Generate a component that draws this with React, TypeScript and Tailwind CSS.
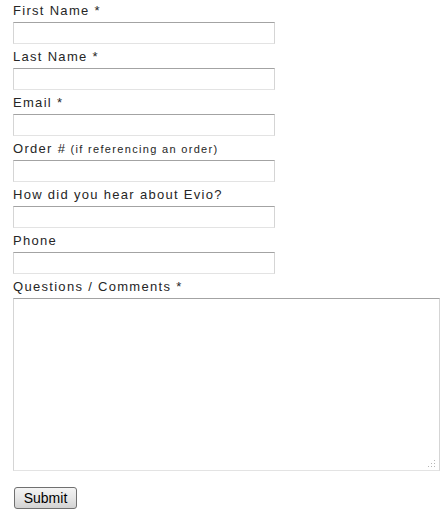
const fields = [
  { label: 'First Name *' },
  { label: 'Last Name *' },
  { label: 'Email *' },
  { label: 'Order #', note: '(if referencing an order)' },
  { label: 'How did you hear about Evio?' },
  { label: 'Phone' },
];

const boxBorder =
  'border border-t-[#a3a3a3] border-l-[#d5d5d5] border-r-[#d5d5d5] border-b-[#e3e3e3] bg-white outline-none';

function App() {
  return (
    <div className="w-[448px] h-[517px] bg-white pl-[13px] font-['Liberation_Sans',Arial,sans-serif] text-[#262626]">
      {fields.map((f) => (
        <div key={f.label} className="flex flex-col pb-[2px]">
          <label className="h-[20px] pt-[1px] leading-[20px] text-[13px] tracking-[0.1em] whitespace-nowrap">
            {f.label}
            {f.note && <span className="text-[11px] tracking-[0.12em]"> {f.note}</span>}
          </label>
          <input type="text" className={`mt-[2px] w-[262px] h-[22px] ${boxBorder}`} />
        </div>
      ))}

      <div className="flex flex-col">
        <label className="h-[20px] pt-[1px] leading-[20px] text-[13px] tracking-[0.1em] whitespace-nowrap">
          Questions / Comments *
        </label>
        <div className="relative mt-[2px] w-[427px] h-[173px]">
          <textarea className={`w-full h-full resize-none ${boxBorder}`} />
          {/* resize grip */}
          <svg className="absolute right-[4px] bottom-[3px]" width="9" height="9" viewBox="0 0 9 9">
            <rect x="7" y="1" width="1" height="1" fill="#b5b5b5" />
            <rect x="4" y="4" width="1" height="1" fill="#b5b5b5" />
            <rect x="7" y="4" width="1" height="1" fill="#b5b5b5" />
            <rect x="1" y="7" width="1" height="1" fill="#b5b5b5" />
            <rect x="4" y="7" width="1" height="1" fill="#b5b5b5" />
            <rect x="7" y="7" width="1" height="1" fill="#b5b5b5" />
          </svg>
        </div>
      </div>

      <button
        type="button"
        className="mt-[16px] ml-[1px] w-[63px] h-[22px] rounded-[3px] border border-[#707070] bg-gradient-to-b from-[#f4f4f4] via-[#e6e6e6] to-[#d2d2d2] text-[14px] leading-[20px] text-black font-['Liberation_Sans',Arial,sans-serif]"
      >
        Submit
      </button>
    </div>
  );
}

export default App;
